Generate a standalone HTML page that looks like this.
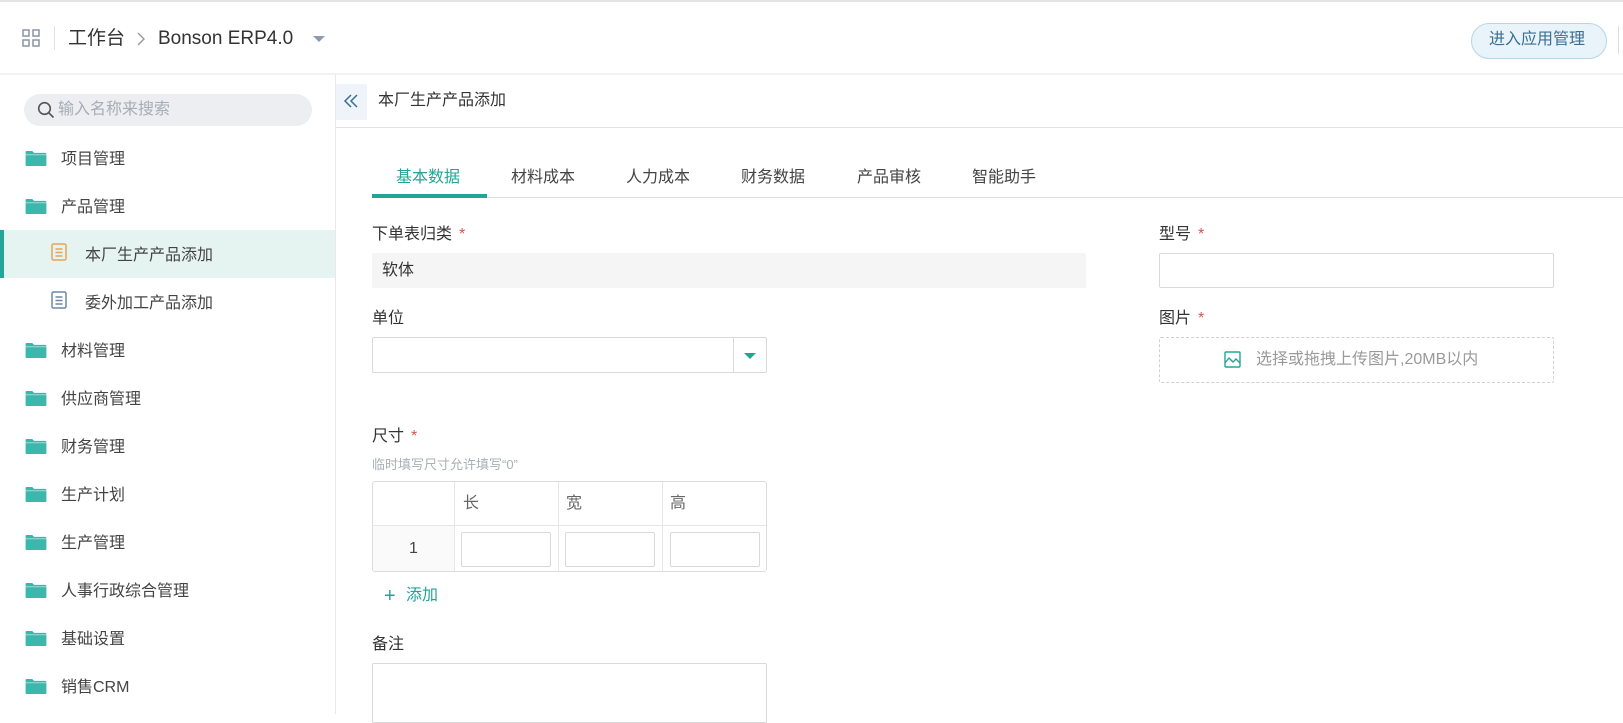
<!DOCTYPE html>
<html><head><meta charset="utf-8"><style>
*{margin:0;padding:0;box-sizing:border-box}
body{width:1623px;height:714px;overflow:hidden;background:#fff;font-family:"Liberation Sans","Noto Sans CJK SC",sans-serif;color:#333;position:relative}
.a{position:absolute}
.t{position:absolute;white-space:nowrap;line-height:1}
.item{position:absolute;left:0;width:335px;height:48px}
.item .fi{position:absolute;left:25px;top:16px}
.item span{position:absolute;left:61px;top:11px;font-size:16px;color:#444}
.lab{font-size:16px;color:#333}
.req{color:#d9534f;margin-left:7px}
.tab{position:absolute;top:163px;font-size:16px;color:#444}
</style></head><body>
<div class="a" style="left:0;top:0;width:1623px;height:2px;background:#e4e4e4"></div>
<svg class="a" style="left:22px;top:29px" width="18" height="18" viewBox="0 0 18 18" fill="none" stroke="#8a95a3" stroke-width="1.5"><rect x="1" y="1" width="6" height="6"/><rect x="11" y="1" width="6" height="6"/><rect x="1" y="11" width="6" height="6"/><rect x="11" y="11" width="6" height="6"/></svg>
<div class="a" style="left:54px;top:26px;width:1px;height:24px;background:#e2e2e2"></div>
<div class="t" style="left:68px;top:29px;font-size:19px;color:#333">工作台</div>
<svg class="a" style="left:136px;top:31px" width="10" height="16" viewBox="0 0 10 16" fill="none" stroke="#999" stroke-width="1.4"><path d="M2 2l6 6-6 6"/></svg>
<div class="t" style="left:158px;top:29px;font-size:19px;color:#333">Bonson ERP4.0</div>
<div class="a" style="left:313px;top:36px;border-left:6px solid transparent;border-right:6px solid transparent;border-top:6px solid #8b9bb0"></div>
<div class="a" style="left:1471px;top:23px;width:136px;height:36px;border-radius:18px;background:#e8f3fa;border:1px solid #b8d5e6"></div>
<div class="t" style="left:1489px;top:32px;font-size:16px;color:#3b6f93">进入应用管理</div>
<div class="a" style="left:1618px;top:26px;width:1px;height:28px;background:#ddd"></div>
<div class="a" style="left:0;top:73px;width:1623px;height:2px;background:#f2f2f2"></div>
<div class="a" style="left:335px;top:75px;width:1px;height:639px;background:#e8e8e8"></div>
<div class="a" style="left:24px;top:94px;width:288px;height:32px;border-radius:16px;background:#eceef1"></div>
<svg class="a" style="left:37px;top:101px" width="18" height="18" viewBox="0 0 18 18" fill="none" stroke="#555" stroke-width="1.6"><circle cx="7.5" cy="7.5" r="5.8"/><path d="M12 12l4.5 4.5"/></svg>
<div class="t" style="left:58px;top:102px;font-size:16px;color:#a7adb5">输入名称来搜索</div>
<svg width="0" height="0" style="position:absolute"><defs><symbol id="fd" viewBox="0 0 22 18"><path d="M0 2a1 1 0 0 1 1-1h6l2 2h12a1 1 0 0 1 1 1v12a1 1 0 0 1-1 1H1a1 1 0 0 1-1-1z" fill="#3bb7ab"/><path d="M0 5h22" stroke="#fff" stroke-width="1" opacity=".5"/></symbol></defs></svg>
<div class="item" style="top:134px"><svg class="fi" width="22" height="17"><use href="#fd"/></svg><span>项目管理</span></div>
<div class="item" style="top:182px"><svg class="fi" width="22" height="17"><use href="#fd"/></svg><span>产品管理</span></div>
<div class="item" style="top:230px;background:#e5f3f1"><div class="a" style="left:0;top:0;width:4px;height:48px;background:#25a597"></div>
<svg class="a" style="left:51px;top:13px" width="16" height="18" viewBox="0 0 16 18" fill="none" stroke="#e9a355" stroke-width="1.5"><rect x="1" y="1" width="14" height="16" rx="1.5"/><path d="M4.5 6h7M4.5 9.5h7M4.5 13h7"/></svg>
<span style="left:85px">本厂生产产品添加</span></div>
<div class="item" style="top:278px"><svg class="a" style="left:51px;top:13px" width="16" height="18" viewBox="0 0 16 18" fill="none" stroke="#6a88a8" stroke-width="1.5"><rect x="1" y="1" width="14" height="16" rx="1.5"/><path d="M4.5 6h7M4.5 9.5h7M4.5 13h7"/></svg><span style="left:85px">委外加工产品添加</span></div>
<div class="item" style="top:326px"><svg class="fi" width="22" height="17"><use href="#fd"/></svg><span>材料管理</span></div>
<div class="item" style="top:374px"><svg class="fi" width="22" height="17"><use href="#fd"/></svg><span>供应商管理</span></div>
<div class="item" style="top:422px"><svg class="fi" width="22" height="17"><use href="#fd"/></svg><span>财务管理</span></div>
<div class="item" style="top:470px"><svg class="fi" width="22" height="17"><use href="#fd"/></svg><span>生产计划</span></div>
<div class="item" style="top:518px"><svg class="fi" width="22" height="17"><use href="#fd"/></svg><span>生产管理</span></div>
<div class="item" style="top:566px"><svg class="fi" width="22" height="17"><use href="#fd"/></svg><span>人事行政综合管理</span></div>
<div class="item" style="top:614px"><svg class="fi" width="22" height="17"><use href="#fd"/></svg><span>基础设置</span></div>
<div class="item" style="top:662px"><svg class="fi" width="22" height="17"><use href="#fd"/></svg><span>销售CRM</span></div>
<div class="a" style="left:336px;top:84px;width:31px;height:36px;background:#eef4fa"></div>
<svg class="a" style="left:343px;top:94px" width="16" height="14" viewBox="0 0 16 14" fill="none" stroke="#3a6d96" stroke-width="1.5"><path d="M8 1L2 7l6 6M14 1L8 7l6 6"/></svg>
<div class="t" style="left:378px;top:93px;font-size:16px;color:#333">本厂生产产品添加</div>
<div class="a" style="left:336px;top:127px;width:1287px;height:1px;background:#e2e2e2"></div>
<div class="a" style="left:372px;top:197px;width:1251px;height:1px;background:#e0e0e0"></div>
<div class="a" style="left:372px;top:194px;width:115px;height:4px;background:#23a596"></div>
<div class="tab" style="left:396px;color:#23a596">基本数据</div>
<div class="tab" style="left:511px">材料成本</div>
<div class="tab" style="left:626px">人力成本</div>
<div class="tab" style="left:741px">财务数据</div>
<div class="tab" style="left:857px">产品审核</div>
<div class="tab" style="left:972px">智能助手</div>
<div class="t lab" style="left:372px;top:227px">下单表归类<span class="req">*</span></div>
<div class="a" style="left:372px;top:253px;width:714px;height:35px;background:#f5f5f5;border-radius:2px"></div>
<div class="t" style="left:382px;top:263px;font-size:16px;color:#333">软体</div>
<div class="t lab" style="left:1159px;top:227px">型号<span class="req">*</span></div>
<div class="a" style="left:1159px;top:253px;width:395px;height:35px;border:1px solid #d9d9d9;border-radius:2px"></div>
<div class="t lab" style="left:372px;top:311px">单位</div>
<div class="a" style="left:372px;top:337px;width:395px;height:36px;border:1px solid #d9d9d9;border-radius:2px"></div>
<div class="a" style="left:733px;top:337px;width:1px;height:36px;background:#d9d9d9"></div>
<div class="a" style="left:744px;top:353px;border-left:6px solid transparent;border-right:6px solid transparent;border-top:6px solid #23a596"></div>
<div class="t lab" style="left:1159px;top:311px">图片<span class="req">*</span></div>
<div class="a" style="left:1159px;top:337px;width:395px;height:46px;border:1px dashed #d0d0d0;border-radius:2px"></div>
<svg class="a" style="left:1224px;top:351px" width="17" height="17" viewBox="0 0 17 17" fill="none" stroke="#23a596" stroke-width="1.4"><rect x="1" y="1" width="15" height="15" rx="1"/><path d="M1 12l4-5 4 4 3-3 4 4"/></svg>
<div class="t" style="left:1256px;top:352px;font-size:16px;color:#9a9a9a">选择或拖拽上传图片,20MB以内</div>
<div class="t lab" style="left:372px;top:429px">尺寸<span class="req">*</span></div>
<div class="t" style="left:372px;top:458px;font-size:13px;color:#aab0b6">临时填写尺寸允许填写“0”</div>
<div class="a" style="left:372px;top:481px;width:395px;height:91px;border:1px solid #dcdcdc;border-radius:3px;overflow:hidden">
<div class="a" style="left:0;top:43px;width:81px;height:48px;background:#fafafa"></div>
<div class="a" style="left:0;top:43px;width:395px;height:1px;background:#e6e6e6"></div>
<div class="a" style="left:81px;top:0;width:1px;height:91px;background:#e6e6e6"></div>
<div class="a" style="left:185px;top:0;width:1px;height:91px;background:#e6e6e6"></div>
<div class="a" style="left:289px;top:0;width:1px;height:91px;background:#e6e6e6"></div>
<div class="t" style="left:90px;top:14px;font-size:16px;color:#666">长</div>
<div class="t" style="left:193px;top:14px;font-size:16px;color:#666">宽</div>
<div class="t" style="left:297px;top:14px;font-size:16px;color:#666">高</div>
<div class="t" style="left:36px;top:59px;font-size:16px;color:#444">1</div>
<div class="a" style="left:88px;top:50px;width:90px;height:35px;border:1px solid #d9d9d9;border-radius:2px"></div>
<div class="a" style="left:192px;top:50px;width:90px;height:35px;border:1px solid #d9d9d9;border-radius:2px"></div>
<div class="a" style="left:297px;top:50px;width:90px;height:35px;border:1px solid #d9d9d9;border-radius:2px"></div>
</div>
<div class="t" style="left:384px;top:586px;font-size:20px;color:#23a596">+</div>
<div class="t" style="left:406px;top:588px;font-size:16px;color:#23a596">添加</div>
<div class="t lab" style="left:372px;top:637px">备注</div>
<div class="a" style="left:372px;top:663px;width:395px;height:60px;border:1px solid #d9d9d9;border-radius:2px"></div>
</body></html>
